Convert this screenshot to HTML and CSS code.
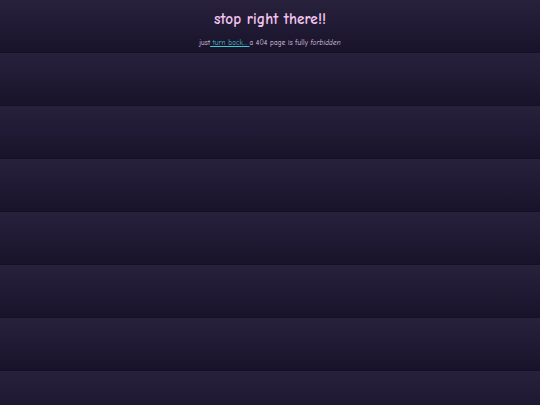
FILE: index.html
```html
<!DOCTYPE html>
<html lang="en">
  <head>
    <meta charset="UTF-8" />
    <meta name="viewport" content="width=device-width, initial-scale=1.0" />
    <title>404 - stop right there!!</title>
    <link rel="stylesheet" href="styles.css">
  </head>
  <body>
    <header class="banner">
      <h1 class="title">stop right there!!</h1>
      <p class="subtitle">
        just<a href="/" class="back"> turn back... </a>a 404 page is fully
        <em>forbidden</em>
      </p>
    </header>
  </body>
</html>
```

FILE: styles.css
```css
html {
  height: 100%;
}
body {
  margin: 0;
  min-height: 100%;
  font-family: "Comic Sans MS", "Comic Neue", cursive, "DejaVu Sans", sans-serif;
  color: #e6d6f0;
  background-color: #1d1630;
  background-image: repeating-linear-gradient(
    180deg,
    #28213b 0px,
    #211a34 26px,
    #18122a 52px,
    #130e21 53px
  );
}
.banner {
  height: 53px;
  text-align: center;
  box-sizing: border-box;
  padding-top: 10px;
}
.title {
  margin: 0;
  font-size: 15.2px;
  font-weight: bold;
  color: #f4c6ee;
  letter-spacing: 0.1px;
}
.subtitle {
  margin: 11px 0 0;
  font-size: 7px;
  letter-spacing: 0.2px;
  color: #e2d6f0;
}
.back {
  color: #44c8d0;
  text-decoration: underline;
}
em {
  font-style: italic;
}
```
